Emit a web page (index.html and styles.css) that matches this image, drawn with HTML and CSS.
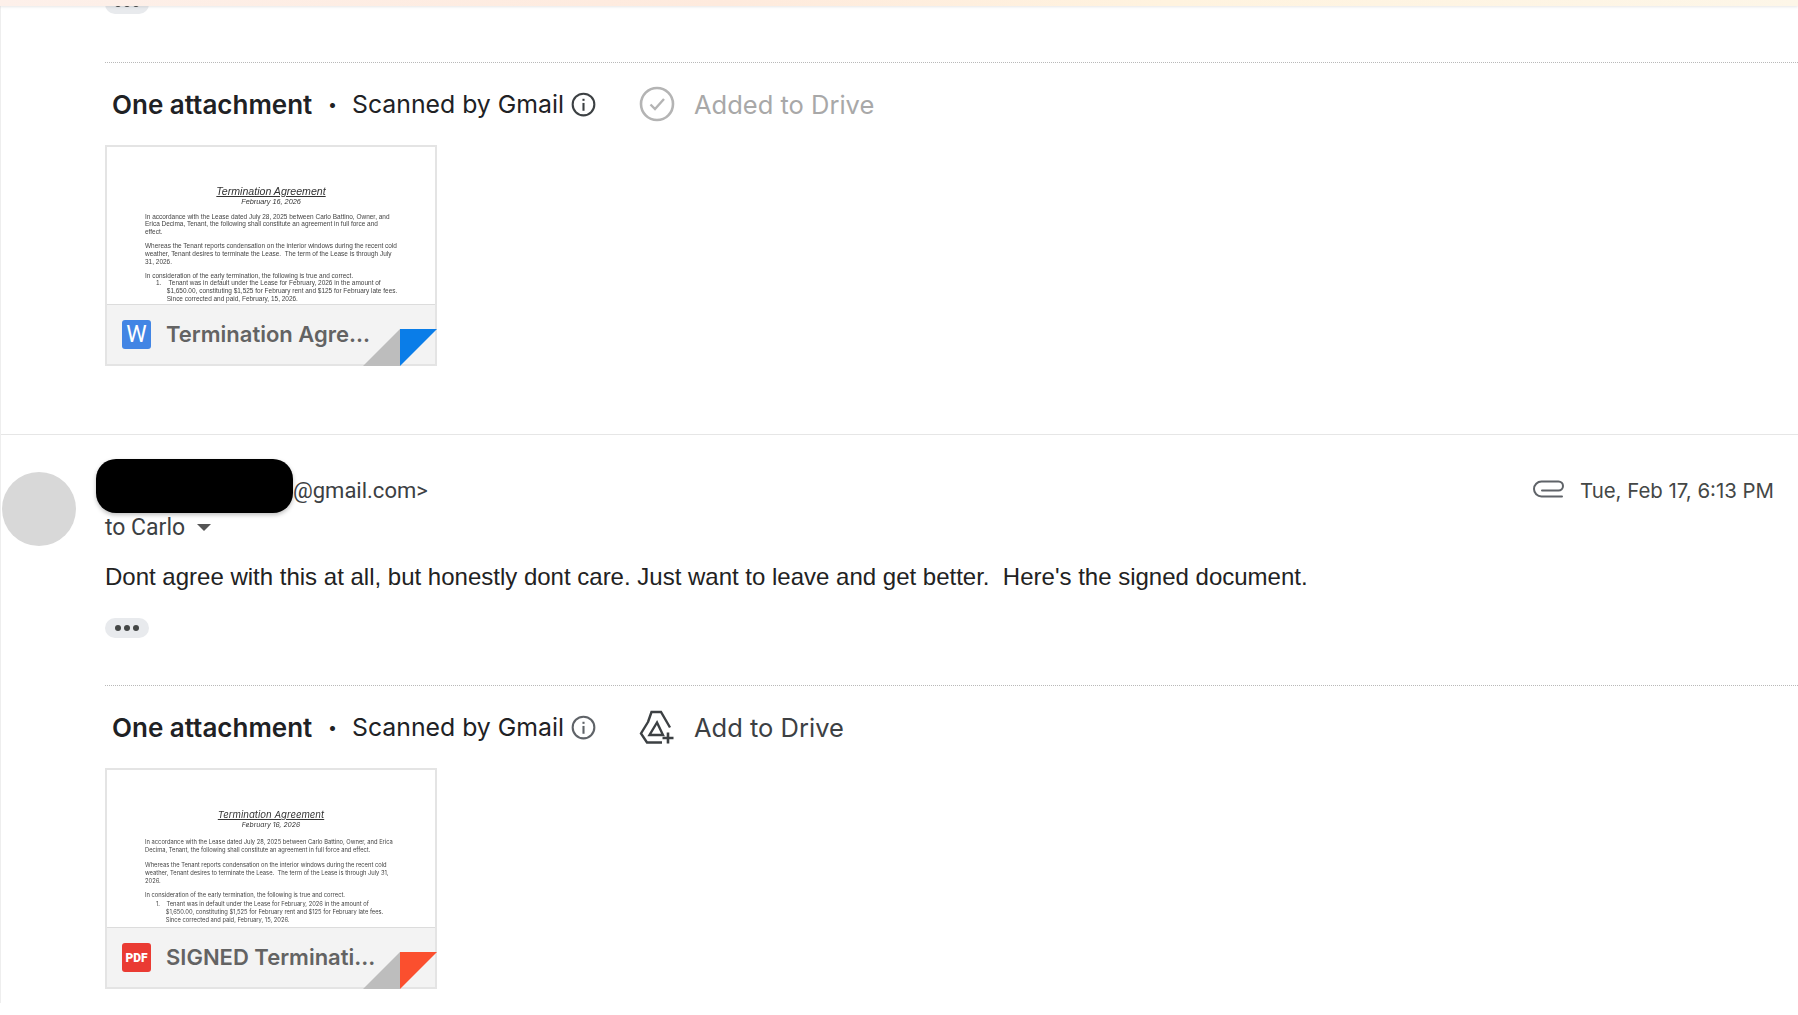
FILE: index.html
```html
<!DOCTYPE html>
<html lang="en">
<head>
<meta charset="utf-8">
<title>Gmail thread</title>
<link rel="stylesheet" href="styles.css">
</head>
<body>
<div class="topband"></div>
<main class="thread">
  <section class="msg-tail">
    <div class="pill pill-cut"><i></i><i></i><i></i></div>
    <div class="dotted first-dotted"></div>
    <div class="att-head">
      <span class="att-title">One attachment</span>
      <span class="att-dot">•</span>
      <span class="att-scan">Scanned by Gmail</span>
      <svg class="info" viewBox="0 0 24 24"><circle cx="12" cy="12" r="10.4" fill="none" stroke="#3c4043" stroke-width="2"/><rect x="11" y="10.5" width="2" height="7.5" fill="#3c4043"/><rect x="11" y="6.5" width="2" height="2" fill="#3c4043"/></svg>
      <svg class="drive-ic" viewBox="0 0 36 36"><circle cx="18" cy="18" r="16" fill="none" stroke="#b4b4b4" stroke-width="2.6"/><path d="M11.5 18.5l4.5 4.5 9-10" fill="none" stroke="#b4b4b4" stroke-width="2.4"/></svg>
      <span class="drive-txt added">Added to Drive</span>
    </div>
    <article class="card">
      <div class="preview word-doc">
        <p class="doc-title">Termination Agreement</p>
        <p class="doc-date">February 16, 2026</p>
        <p class="doc-p">In accordance with the Lease dated July 28, 2025 between Carlo Battino, Owner, and<br>Erica Decima, Tenant, the following shall constitute an agreement in full force and<br>effect.</p>
        <p class="doc-p">Whereas the Tenant reports condensation on the interior windows during the recent cold<br>weather, Tenant desires to terminate the Lease.&nbsp; The term of the Lease is through July<br>31, 2026.</p>
        <p class="doc-p">In consideration of the early termination, the following is true and correct.</p>
        <p class="doc-li">1.&nbsp;&nbsp;&nbsp;&nbsp;Tenant was in default under the Lease for February, 2026 in the amount of<br>&nbsp;&nbsp;&nbsp;&nbsp;&nbsp;&nbsp;$1,650.00, constituting $1,525 for February rent and $125 for February late fees.<br>&nbsp;&nbsp;&nbsp;&nbsp;&nbsp;&nbsp;Since corrected and paid, February, 15, 2026.</p>
      </div>
      <div class="card-foot">
        <span class="type-ic type-w">W</span>
        <span class="file-name">Termination Agre...</span>
      </div>
      <svg class="fold" viewBox="0 0 74 37"><polygon points="0,37 37,0 37,37" fill="#bdbdbd"/><polygon points="37,0 74,0 37,37" fill="#0a7de8"/></svg>
    </article>
  </section>

  <section class="msg">
    <div class="avatar"></div>
    <div class="msg-main">
      <div class="sender-row">
        <div class="sender">
          <span class="redact"></span>
          <span class="addr">@gmail.com&gt;</span>
        </div>
        <div class="meta">
          <svg class="clip" viewBox="0 0 32 18"><path d="M29 16.500H8.500a7.500 7.500 0 0 1 0-15H25.500a4.500 4.500 0 0 1 0 9H9" fill="none" stroke="#5f6368" stroke-width="2" stroke-linecap="round"/></svg>
          <span class="date">Tue, Feb 17, 6:13 PM</span>
        </div>
      </div>
      <div class="to-row"><span>to Carlo</span><span class="caret"></span></div>
      <p class="body-text">Dont agree with this at all, but honestly dont care. Just want to leave and get better.&nbsp; Here's the signed document.</p>
      <div class="pill"><i></i><i></i><i></i></div>
      <div class="dotted second-dotted"></div>
      <div class="att-head">
        <span class="att-title">One attachment</span>
        <span class="att-dot">•</span>
        <span class="att-scan">Scanned by Gmail</span>
        <svg class="info" viewBox="0 0 24 24"><circle cx="12" cy="12" r="10.4" fill="none" stroke="#5f6368" stroke-width="2"/><rect x="11" y="10.5" width="2" height="7.5" fill="#5f6368"/><rect x="11" y="6.5" width="2" height="2" fill="#5f6368"/></svg>
        <svg class="drive-ic" viewBox="0 0 36 36"><path d="M9 13L12.500 3h9.500l9 15.500M9 13L2 24.500 8 33.500h15" fill="none" stroke="#3c4043" stroke-width="2.4"/><path d="M18 13.500L10.500 26H24z" fill="none" stroke="#3c4043" stroke-width="2.4"/><path d="M29 23.500v11M23.500 29h11" fill="none" stroke="#3c4043" stroke-width="2.6"/></svg>
        <span class="drive-txt">Add to Drive</span>
      </div>
      <article class="card">
        <div class="preview pdf-doc">
          <p class="doc-title">Termination Agreement</p>
          <p class="doc-date">February 16, 2026</p>
          <p class="doc-p">In accordance with the Lease dated July 28, 2025 between Carlo Battino, Owner, and Erica<br>Decima, Tenant, the following shall constitute an agreement in full force and effect.</p>
          <p class="doc-p">Whereas the Tenant reports condensation on the interior windows during the recent cold<br>weather, Tenant desires to terminate the Lease.&nbsp; The term of the Lease is through July 31,<br>2026.</p>
          <p class="doc-p">In consideration of the early termination, the following is true and correct.</p>
          <p class="doc-li">1.&nbsp;&nbsp;&nbsp;&nbsp;Tenant was in default under the Lease for February, 2026 in the amount of<br>&nbsp;&nbsp;&nbsp;&nbsp;&nbsp;&nbsp;$1,650.00, constituting $1,525 for February rent and $125 for February late fees.<br>&nbsp;&nbsp;&nbsp;&nbsp;&nbsp;&nbsp;Since corrected and paid, February, 15, 2026.</p>
        </div>
        <div class="card-foot">
          <span class="type-ic type-pdf">PDF</span>
          <span class="file-name">SIGNED Terminati...</span>
        </div>
        <svg class="fold" viewBox="0 0 74 37"><polygon points="0,37 37,0 37,37" fill="#bdbdbd"/><polygon points="37,0 74,0 37,37" fill="#fb4f2e"/></svg>
      </article>
    </div>
  </section>
</main>
</body>
</html>
```

FILE: styles.css
```css
* { box-sizing: border-box; }
html, body { margin: 0; padding: 0; }
body {
  width: 1798px;
  height: 1015px;
  overflow: hidden;
  background: #fff;
  font-family: Roboto, "Liberation Sans", sans-serif;
  color: #202124;
}
.topband {
  position: relative;
  z-index: 2;
  height: 6px;
  background: linear-gradient(90deg, #fdf0ea 0%, #feeadd 40%, #fff3df 65%, #fdf6e8 100%);
  box-shadow: 0 1px 3px rgba(0, 0, 0, .1);
}
.thread { border-left: 1px solid #eeeeee; height: 1009px; }
.msg-tail { padding-left: 104px; height: 441px; border-bottom: 1px solid #e6e6e6; }

.pill {
  display: flex;
  align-items: center;
  justify-content: center;
  gap: 3px;
  width: 44px;
  height: 20px;
  border-radius: 10px;
  background: #e8eaed;
}
.pill i { width: 6px; height: 6px; border-radius: 50%; background: #444746; }
.pill-cut { margin-top: -12px; }

.dotted { border-top: 1px dotted #b9b9b9; }
.first-dotted { margin-top: 48px; }
.second-dotted { margin-top: 47px; }

.att-head {
  display: flex;
  align-items: center;
  height: 40px;
  margin-top: 21px;
  padding-left: 7px;
  font-family: Inter, Roboto, sans-serif;
  font-size: 25.5px;
  color: #202124;
}
.att-title { font-size: 26px; font-weight: 600; width: 216px; white-space: nowrap; }
.att-dot { font-size: 16px; width: 24px; }
.att-scan { font-size: 24.800px; width: 219px; white-space: nowrap; }
.info { width: 25px; height: 25px; flex: none; }
.drive-ic { width: 36px; height: 36px; margin-left: 43px; flex: none; }
.drive-txt { margin-left: 19px; color: #3c4043; white-space: nowrap; }
.drive-txt.added { color: #a8a8a8; }

.card {
  position: relative;
  display: flex;
  flex-direction: column;
  width: 332px;
  height: 221px;
  margin-top: 21px;
  border: 2px solid #e4e4e4;
  background: #fff;
}
.preview {
  height: 157px;
  overflow: hidden;
  padding: 39px 30px 0 38px;
  font-size: 6.47px;
  line-height: 7.7px;
  color: #444;
  white-space: nowrap;
  filter: blur(.25px);
}
.word-doc { font-family: "Liberation Sans", sans-serif; }
.pdf-doc { font-family: Inter, Roboto, sans-serif; font-size: 5.77px; line-height: 8.1px; padding-top: 39px; }
.preview p { margin: 0; }
.doc-title { font-size: 10.600px; line-height: 11px; font-style: italic; text-decoration: underline; text-align: center; margin-left: -38px !important; margin-right: -30px !important; color: #333; }
.pdf-doc .doc-title { font-size: 9.600px; }
.doc-date { font-size: 7.300px; line-height: 9px; font-style: italic; text-align: center; margin: 0 -30px 6.500px -38px !important; color: #333; }
.pdf-doc .doc-date { font-size: 6.800px; margin-bottom: 9px !important; }
.doc-p { margin-bottom: 6.500px !important; }
.doc-li { padding-left: 11px; margin-top: -6.500px !important; }

.card-foot {
  display: flex;
  align-items: center;
  flex: 1;
  border-top: 1px solid #dcdcdc;
  background: #f3f3f3;
  padding-left: 15px;
  gap: 15px;
}
.type-ic {
  display: flex;
  align-items: center;
  justify-content: center;
  width: 29px;
  height: 29px;
  border-radius: 3px;
  color: #fff;
  font-family: Roboto, sans-serif;
}
.type-w { background: #4285e4; font-size: 23px; }
.type-pdf { background: #ea3b33; font-size: 12px; font-weight: 900; }
.file-name {
  font-family: Inter, Roboto, sans-serif;
  font-size: 22px;
  font-weight: 600;
  color: #636363;
  white-space: nowrap;
  margin-bottom: 2px;
}
.fold {
  position: absolute;
  right: -2px;
  bottom: -2px;
  width: 74px;
  height: 37px;
}

.msg {
  display: flex;
  padding-top: 37px;
}
.avatar {
  flex: none;
  width: 74px;
  height: 74px;
  margin-left: 1px;
  border-radius: 50%;
  background: #d8d8d8;
}
.msg-main { flex: 1; margin-left: 29px; min-width: 0; }
.sender-row {
  display: flex;
  align-items: center;
  justify-content: space-between;
  height: 36px;
  padding-right: 24px;
}
.sender { display: flex; align-items: center; height: 36px; }
.redact {
  width: 197px;
  height: 54px;
  margin-left: -9px;
  margin-bottom: 9px;
  border-radius: 20px;
  background: #000;
  box-shadow: 0 2px 4px rgba(0, 0, 0, .25);
}
.addr { font-size: 22px; color: #3c4043; }
.meta { display: flex; align-items: center; gap: 15px; color: #5f6368; }
.clip { width: 32px; height: 18px; margin-bottom: 3px; }
.date { font-family: Inter, Roboto, sans-serif; font-size: 20.400px; color: #444746; white-space: nowrap; }
.to-row {
  display: flex;
  align-items: center;
  gap: 12px;
  height: 36px;
  margin-top: 1px;
  font-size: 23px;
  color: #3c4043;
}
.caret {
  width: 0;
  height: 0;
  border-left: 7px solid transparent;
  border-right: 7px solid transparent;
  border-top: 7px solid #555;
}
.body-text {
  margin: 17px 0 0;
  font-family: "Liberation Sans", sans-serif;
  font-size: 24px;
  line-height: 30px;
  color: #222;
  white-space: nowrap;
}
.msg-main .pill { margin-top: 26px; }
```
